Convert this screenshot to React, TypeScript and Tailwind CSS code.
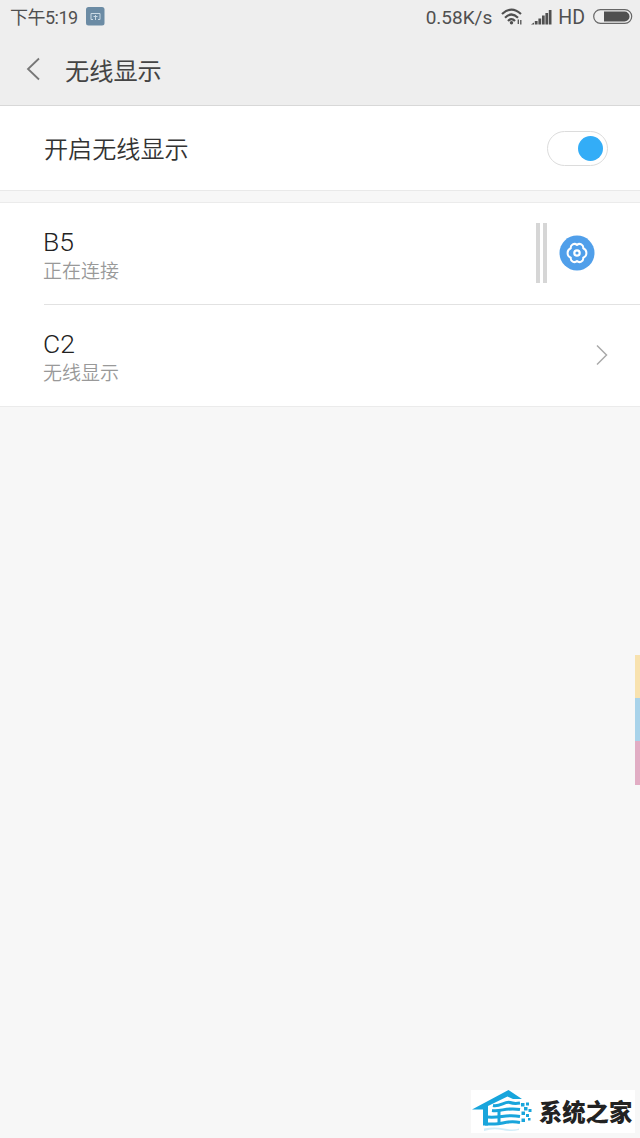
import React, { useState } from "react";

interface Device {
  name: string;
  status: string;
  connecting: boolean;
}

const devices: Device[] = [
  { name: "B5", status: "正在连接", connecting: true },
  { name: "C2", status: "无线显示", connecting: false },
];

const CastIcon = () => (
  <svg width="19" height="19" viewBox="0 0 19 19" fill="none">
    <rect width="18.5" height="18.5" rx="2.5" fill="#6b8ba4" />
    <path d="M7 12.500H5V6.500h9v6h-2" stroke="#c9d9e4" strokeWidth="1" />
    <path d="M7.500 9.500h4M9.500 8v5" stroke="#c9d9e4" strokeWidth="1" />
  </svg>
);

const WifiIcon = () => (
  <svg width="22" height="18" viewBox="0 0 22 18" fill="none" stroke="#505050" strokeWidth="2.2">
    <path d="M1 6Q10.500-2.800 20 6" />
    <path d="M4 9.700Q10.500 3.300 17 9.700" />
    <path d="M7 13Q10.500 9.200 14 13" />
    <circle cx="10.500" cy="14.800" r="1.700" fill="#505050" stroke="none" />
    <path d="M17.300 11.500v4.500M19.800 12V16.500" strokeWidth="1.300" />
  </svg>
);

const SignalIcon = () => (
  <svg width="21" height="16" viewBox="0 0 21 16" fill="#505050">
    <path d="M0 15.500l3-2v2zM3.800 12h2.800v3.500H3.800zM7.400 9.500h2.800v6H7.400zM11 6.500h2.700v9H11zM14.400 4h2.700v11.500h-2.700zM17.800 1h2.700v14.500h-2.700z" />
  </svg>
);

const BatteryIcon = () => (
  <svg width="40" height="16" viewBox="0 0 40 16" fill="none">
    <rect x="0.700" y="0.700" width="38" height="13.600" rx="6.800" stroke="#666" strokeWidth="1.200" />
    <path d="M11 2.500h20.500a5 5 0 0 1 0 10H11z" fill="#505050" />
  </svg>
);

const GearIcon = () => (
  <svg width="36" height="36" viewBox="0 0 36 36" fill="none">
    <circle cx="18" cy="18" r="17.500" fill="#509fea" />
    <path
      d="M18 10C20.500 7.500 24.800 9.800 24.200 13.300C28.500 14.900 28.500 21.100 24.200 22.700C24.800 26.200 20.500 28.500 18 26C15.500 28.500 11.200 26.200 11.800 22.700C7.500 21.100 7.500 14.900 11.800 13.300C11.200 9.800 15.500 7.500 18 10Z"
      stroke="#fff"
      strokeWidth="2"
      strokeLinejoin="round"
    />
    <circle cx="18" cy="18" r="2.700" stroke="#fff" strokeWidth="2.200" />
  </svg>
);

const HouseLogo = () => (
  <svg width="62" height="43" viewBox="0 0 62 43" fill="#18a5dc">
    <path d="M1 19.500L37.500 0L51 9H42L36.500 6.500L17 16V19.500z" />
    <path d="M12 16h5v19.500H12z" />
    <g fill="none" stroke="#18a5dc" strokeWidth="3">
      <path d="M22 15.500C29 17 34 11 39 12.500Q43 14 49 13" />
      <path d="M21 20.500C30 22 35 17 49 19.500" />
      <path d="M17 27C30 28 35 24 49 26.500" />
      <path d="M14 34H24C32 34 36 30 49 32.500" />
      <path d="M28 19.500v14" />
    </g>
    <path d="M50 13h3.500v3.500H50zM55 12.500h3v3h-3zM53 17h3.500v3.500H53zM57.500 19h3v3h-3zM50.500 21.500H54V25h-3.500zM55 24h3v3h-3zM50.500 28.500H54V32h-3.500zM57 28h2.500v2.500H57z" />
    <path d="M13 38.500q10-2 20 0t15 0v1.500q-8 2-17 0t-18 1z" opacity=".2" />
  </svg>
);

const App: React.FC = () => {
  const [enabled, setEnabled] = useState<boolean>(true);

  return (
    <div className="relative h-[1138px] w-[640px] overflow-hidden bg-[#f7f7f7] font-['Noto_Sans_CJK_SC',sans-serif] text-[#333]">
      <div className="h-[106px] border-b border-[#d8d8d8] bg-[#eee]">
        <div className="flex h-[34px] items-center justify-between pl-2.5 pr-[7px] text-[#505050]">
          <div className="flex items-center gap-2 pb-px">
            <span className="w-[68px] whitespace-nowrap pt-0.5 font-['Roboto','Noto_Sans_CJK_SC',sans-serif] text-[18px] leading-none tracking-[-0.5px]">下午5:19</span>
            <CastIcon />
          </div>
          <div className="flex items-center">
            <span className="mr-[9px] font-['Roboto',sans-serif] text-[19px] leading-none">0.58K/s</span>
            <WifiIcon />
            <span className="ml-2 mr-1.5">
              <SignalIcon />
            </span>
            <span className="mr-2 pt-px font-['Roboto',sans-serif] text-[19.500px] leading-none">HD</span>
            <BatteryIcon />
          </div>
        </div>
        <div className="flex h-[71px] items-center pl-[26px]">
          <button aria-label="返回" className="pb-0.5">
            <svg width="14" height="24" viewBox="0 0 14 24" fill="none" stroke="#777" strokeWidth="1.800">
              <path d="M13 1.500L2 12l11 10.500" />
            </svg>
          </button>
          <h1 className="ml-[25px] pt-0.5 text-[24.200px] leading-none text-[#444]">无线显示</h1>
        </div>
      </div>

      <div className="flex h-[85px] items-center justify-between border-b border-[#e9e9e9] bg-white pl-11 pr-8">
        <span className="pt-px text-[24.100px] font-[350] leading-none">开启无线显示</span>
        <button
          aria-label="开启无线显示"
          className={`flex h-[35px] w-[61px] items-center rounded-full border border-[#dcdcdc] px-1 ${enabled ? "justify-end" : "justify-start"}`}
          onClick={() => setEnabled(!enabled)}
        >
          <span className="size-[25px] rounded-full bg-[#33adf7]" />
        </button>
      </div>

      <div className="mt-[11px] border-y border-[#ebebeb] bg-white">
        {devices.map((device, index) => (
          <div
            key={device.name}
            className={`ml-11 flex items-center justify-between ${index > 0 ? "h-[102px] border-t border-[#e2e2e2] pr-8" : "h-[101px] pr-[45px]"}`}
          >
            <div className="-ml-px pt-0.5">
              <p className="pt-px font-['Roboto',sans-serif] text-[26.500px] font-light leading-[30px] text-[#222]">{device.name}</p>
              <p className="text-[19px] font-[350] leading-[26px] text-[#999]">{device.status}</p>
            </div>
            {device.connecting ? (
              <div className="flex items-center gap-3 pb-0.5">
                <div className="flex gap-[3px]">
                  <span className="h-[60px] w-1 bg-[#d6d6d6]" />
                  <span className="h-[60px] w-1 bg-[#d6d6d6]" />
                </div>
                <GearIcon />
              </div>
            ) : (
              <svg className="mb-0.5" width="12" height="22" viewBox="0 0 12 22" fill="none" stroke="#aaa" strokeWidth="1.500">
                <path d="M1 1.500L10.500 11 1 20.500" />
              </svg>
            )}
          </div>
        ))}
      </div>

      {/* floating edge handle */}
      <div className="absolute right-0 top-[655px] w-[5px]">
        <div className="h-[43px] bg-[#f8e2af]" />
        <div className="h-[43px] bg-[#a9d3ea]" />
        <div className="h-[44px] bg-[#e2adc4]" />
      </div>

      {/* site badge */}
      <div className="absolute bottom-[5px] right-[5px] flex h-[43px] w-[164px] items-center bg-white">
        <HouseLogo />
        <span className="ml-1.5 whitespace-nowrap text-[23.300px] font-black leading-none text-[#222]">系统之家</span>
      </div>
    </div>
  );
};

export default App;
